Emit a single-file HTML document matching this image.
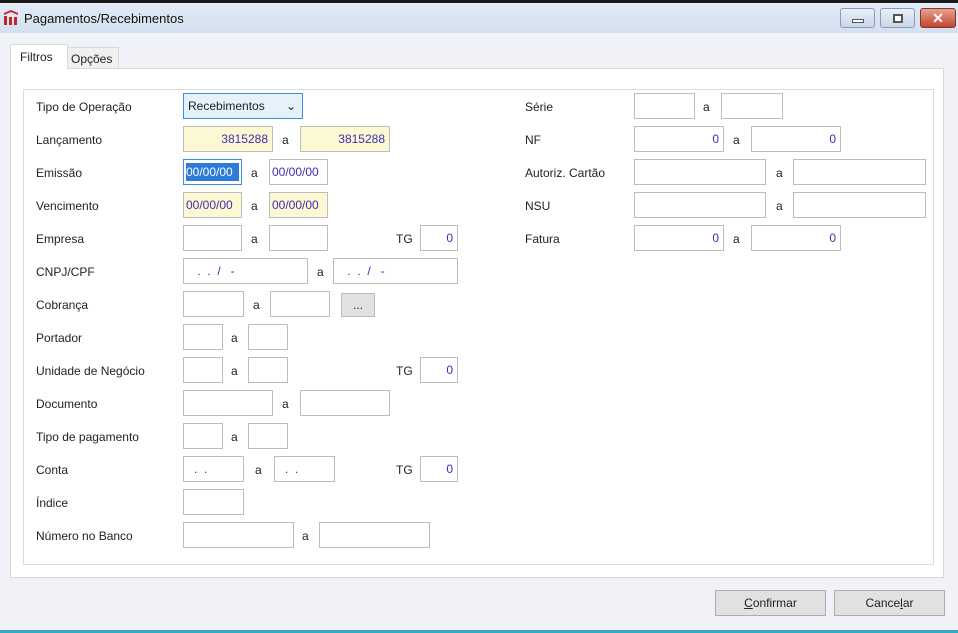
<!DOCTYPE html>
<html><head><meta charset="utf-8"><style>
*{box-sizing:border-box;margin:0;padding:0}
body{width:958px;height:633px;overflow:hidden;background:#f1f2f7;font-family:"Liberation Sans",sans-serif;font-size:12px;color:#222;position:relative}
.abs{position:absolute}
.f{position:absolute;height:26px;border:1px solid #bdbdbd;background:#fff;color:#3a2fb0;font-size:12px;line-height:24px;padding:0 4px}
.y{background:#fdf8d4}
.r{text-align:right}
.l{position:absolute;font-size:12px;color:#222;line-height:14px}
.btn{position:absolute;height:26px;border:1px solid #adadad;background:#e1e1e1;text-align:center;line-height:24px;font-size:12px;color:#222}
</style></head><body>
<div class="abs" style="left:0;top:0;width:958px;height:3px;background:#1a1a1a"></div>
<div class="abs" style="left:0;top:3px;width:958px;height:30px;background:linear-gradient(#e3ebf6,#d4e0ef)"></div>
<svg class="abs" style="left:3px;top:9px" width="16" height="17" viewBox="0 0 16 17"><path d="M1 4 L8 1 L15 4 L15 6 L8 3 L1 6Z" fill="#c0272d"/><rect x="1" y="7" width="3" height="9" fill="#c0272d"/><rect x="6" y="8" width="3" height="8" fill="#c0272d"/><rect x="11" y="8" width="3" height="8" fill="#c0272d"/></svg>
<div class="l" style="left:24px;top:12px;font-size:13px;color:#111">Pagamentos/Recebimentos</div>
<div class="abs" style="left:840px;top:8px;width:35px;height:20px;border:1px solid #8a9bb3;border-radius:3px;background:linear-gradient(#eaf0f8,#c9d7ea)"><div class="abs" style="left:11px;top:10px;width:12px;height:4px;border:1px solid #555;background:#fff"></div></div>
<div class="abs" style="left:880px;top:8px;width:35px;height:20px;border:1px solid #8a9bb3;border-radius:3px;background:linear-gradient(#eaf0f8,#c9d7ea)"><div class="abs" style="left:12px;top:5px;width:10px;height:9px;border:2px solid #555;background:#fff"></div></div>
<div class="abs" style="left:920px;top:8px;width:36px;height:20px;border:1px solid #7a3a30;border-radius:3px;background:linear-gradient(#e8a190,#c3452f);color:#fff;font-weight:bold;text-align:center;line-height:18px;font-size:14px">✕</div>
<!-- tabs -->
<div class="abs" style="left:10px;top:44px;width:58px;height:25px;background:#fff;border:1px solid #d9d9d9;border-bottom:none;z-index:2"></div>
<div class="l" style="left:20px;top:50px;z-index:3">Filtros</div>
<div class="abs" style="left:67px;top:47px;width:52px;height:21px;background:#f0f0f0;border:1px solid #d9d9d9;border-bottom:none"></div>
<div class="l" style="left:71px;top:52px">Opções</div>
<div class="abs" style="left:10px;top:68px;width:934px;height:510px;background:#fff;border:1px solid #d9d9d9"></div>
<div class="abs" style="left:23px;top:89px;width:911px;height:476px;border:1px solid #dcdcdc"></div>

<!-- left labels -->
<div class="l" style="left:36px;top:100px">Tipo de Operação</div>
<div class="l" style="left:36px;top:133px">Lançamento</div>
<div class="l" style="left:36px;top:166px">Emissão</div>
<div class="l" style="left:36px;top:199px">Vencimento</div>
<div class="l" style="left:36px;top:232px">Empresa</div>
<div class="l" style="left:36px;top:265px">CNPJ/CPF</div>
<div class="l" style="left:36px;top:298px">Cobrança</div>
<div class="l" style="left:36px;top:331px">Portador</div>
<div class="l" style="left:36px;top:364px">Unidade de Negócio</div>
<div class="l" style="left:36px;top:397px">Documento</div>
<div class="l" style="left:36px;top:430px">Tipo de pagamento</div>
<div class="l" style="left:36px;top:463px">Conta</div>
<div class="l" style="left:36px;top:496px">Índice</div>
<div class="l" style="left:36px;top:529px">Número no Banco</div>

<div class="f" style="left:183px;top:93px;width:120px;border-color:#3a8ee0;background:#e5f1fb;color:#222">Recebimentos<span class="abs" style="right:6px;top:0">&#8964;</span></div>

<div class="f y r" style="left:183px;top:126px;width:90px">3815288</div><div class="l" style="left:282px;top:133px">a</div>
<div class="f y r" style="left:300px;top:126px;width:90px">3815288</div>

<div class="f" style="left:183px;top:159px;width:59px;border-color:#3a8ee0;padding:3px 2px"><div style="background:#2d7bd6;color:#fff;line-height:18px;height:18px">00/00/00</div></div><div class="l" style="left:251px;top:166px">a</div>
<div class="f" style="left:269px;top:159px;width:59px;padding:0 2px">00/00/00</div>

<div class="f y" style="left:183px;top:192px;width:59px;padding:0 2px">00/00/00</div><div class="l" style="left:251px;top:199px">a</div>
<div class="f y" style="left:269px;top:192px;width:59px;padding:0 2px">00/00/00</div>

<div class="f" style="left:183px;top:225px;width:59px"></div><div class="l" style="left:251px;top:232px">a</div>
<div class="f" style="left:269px;top:225px;width:59px"></div>
<div class="l" style="left:396px;top:232px">TG</div><div class="f r" style="left:420px;top:225px;width:38px">0</div>

<div class="f" style="left:183px;top:258px;width:125px;padding-left:10px">&nbsp;.&nbsp;&nbsp;.&nbsp;&nbsp;/&nbsp;&nbsp;&nbsp;-</div><div class="l" style="left:317px;top:265px">a</div>
<div class="f" style="left:333px;top:258px;width:125px;padding-left:10px">&nbsp;.&nbsp;&nbsp;.&nbsp;&nbsp;/&nbsp;&nbsp;&nbsp;-</div>

<div class="f" style="left:183px;top:291px;width:61px"></div><div class="l" style="left:253px;top:298px">a</div>
<div class="f" style="left:270px;top:291px;width:60px"></div>
<div class="btn" style="left:341px;top:293px;width:34px;height:24px;line-height:22px;border-color:#bbb">...</div>

<div class="f" style="left:183px;top:324px;width:40px"></div><div class="l" style="left:231px;top:331px">a</div>
<div class="f" style="left:248px;top:324px;width:40px"></div>

<div class="f" style="left:183px;top:357px;width:40px"></div><div class="l" style="left:231px;top:364px">a</div>
<div class="f" style="left:248px;top:357px;width:40px"></div>
<div class="l" style="left:396px;top:364px">TG</div><div class="f r" style="left:420px;top:357px;width:38px">0</div>

<div class="f" style="left:183px;top:390px;width:90px"></div><div class="l" style="left:282px;top:397px">a</div>
<div class="f" style="left:300px;top:390px;width:90px"></div>

<div class="f" style="left:183px;top:423px;width:40px"></div><div class="l" style="left:231px;top:430px">a</div>
<div class="f" style="left:248px;top:423px;width:40px"></div>

<div class="f" style="left:183px;top:456px;width:61px;padding-left:10px">.&nbsp;&nbsp;.</div><div class="l" style="left:255px;top:463px">a</div>
<div class="f" style="left:274px;top:456px;width:61px;padding-left:10px">.&nbsp;&nbsp;.</div>
<div class="l" style="left:396px;top:463px">TG</div><div class="f r" style="left:420px;top:456px;width:38px">0</div>

<div class="f" style="left:183px;top:489px;width:61px"></div>

<div class="f" style="left:183px;top:522px;width:111px"></div><div class="l" style="left:302px;top:529px">a</div>
<div class="f" style="left:319px;top:522px;width:111px"></div>

<!-- right -->
<div class="l" style="left:525px;top:100px">Série</div>
<div class="l" style="left:525px;top:133px">NF</div>
<div class="l" style="left:525px;top:166px">Autoriz. Cartão</div>
<div class="l" style="left:525px;top:199px">NSU</div>
<div class="l" style="left:525px;top:232px">Fatura</div>

<div class="f" style="left:634px;top:93px;width:61px"></div><div class="l" style="left:703px;top:100px">a</div>
<div class="f" style="left:721px;top:93px;width:62px"></div>
<div class="f r" style="left:634px;top:126px;width:90px">0</div><div class="l" style="left:733px;top:133px">a</div>
<div class="f r" style="left:751px;top:126px;width:90px">0</div>
<div class="f" style="left:634px;top:159px;width:132px"></div><div class="l" style="left:776px;top:166px">a</div>
<div class="f" style="left:793px;top:159px;width:133px"></div>
<div class="f" style="left:634px;top:192px;width:132px"></div><div class="l" style="left:776px;top:199px">a</div>
<div class="f" style="left:793px;top:192px;width:133px"></div>
<div class="f r" style="left:634px;top:225px;width:90px">0</div><div class="l" style="left:733px;top:232px">a</div>
<div class="f r" style="left:751px;top:225px;width:90px">0</div>

<div class="btn" style="left:715px;top:590px;width:111px"><u>C</u>onfirmar</div>
<div class="btn" style="left:834px;top:590px;width:111px">Cance<u>l</u>ar</div>
<div class="abs" style="left:0;top:630px;width:958px;height:3px;background:#3aa6c8"></div>
</body></html>
